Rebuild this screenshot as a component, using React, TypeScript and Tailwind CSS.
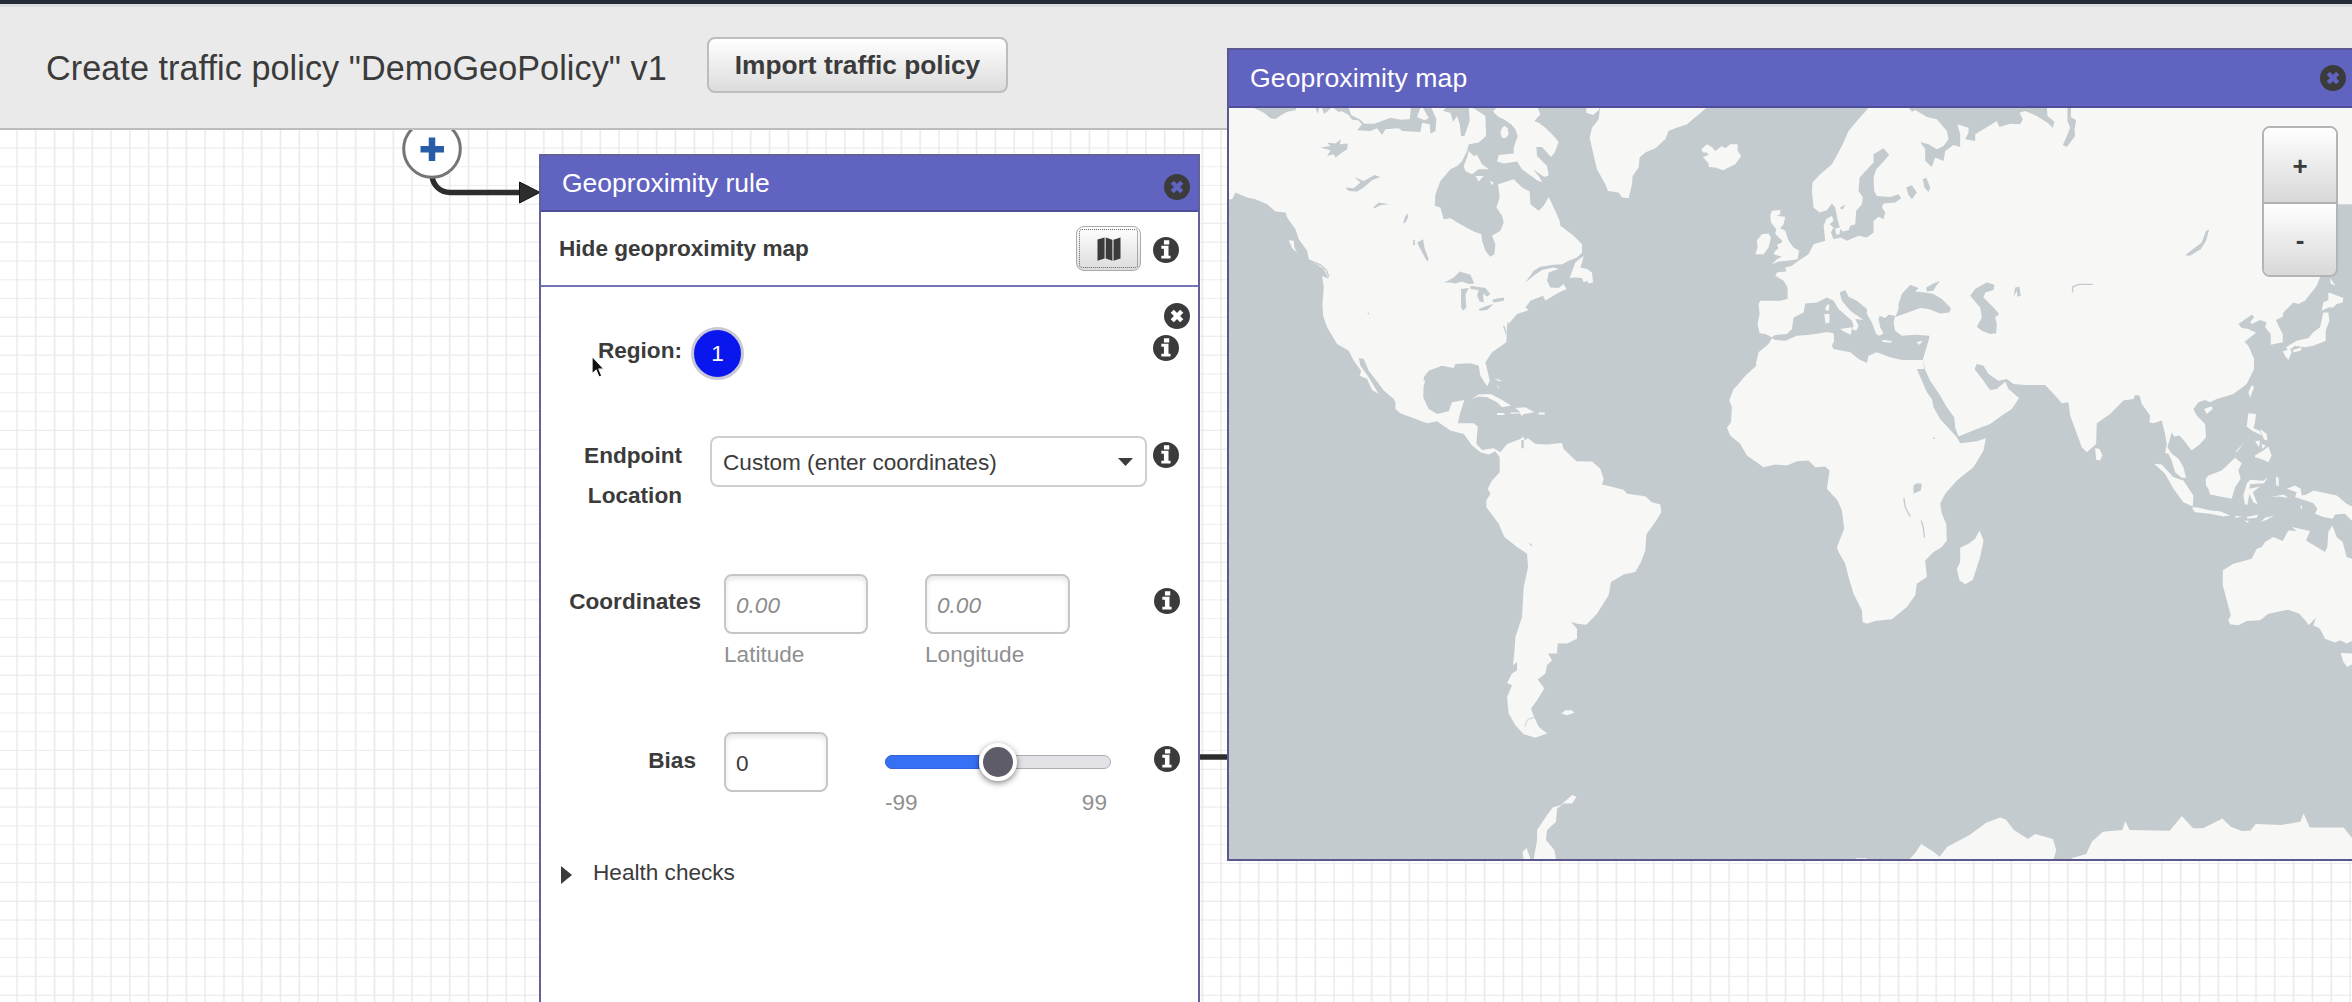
import React from "react";

const LAND = "#f7f7f6";
const SEA = "#c4cbce";
const THIRD = 1 / 3;

function InfoIcon({ className = "" }: { className?: string }) {
  return (
    <svg viewBox="0 0 24 24" className={"size-[26px] shrink-0 " + className} aria-label="Info">
      <circle cx="12" cy="12" r="12" fill="#3b3b3b" />
      <path d="M10.1 3.1h4.9v3.8h-4.9zM7.7 8.1h6.6v9.1h1.9v2.7H7.7v-2.7h2.4v-6.4H7.7z" fill="#fff" />
    </svg>
  );
}

function CloseIcon({ cross, className = "" }: { cross: string; className?: string }) {
  return (
    <svg viewBox="0 0 24 24" className={"size-[26px] shrink-0 " + className} aria-label="Close">
      <circle cx="12" cy="12" r="12" fill="#3b3b3b" />
      <path d="M7.6 7.6l8.8 8.8M16.4 7.6l-8.8 8.8" stroke={cross} strokeWidth="4.1" />
    </svg>
  );
}

function MapIcon() {
  return (
    <svg viewBox="0 0 24 24" className="size-6">
      <path
        d="M.5 2.6L7.6.4v21.2L.5 23.8zM8.7.4l6.7 2.3v21.1l-6.7-2.2zM16.5 2.7L23.5.4v21.2l-7 2.2z"
        fill="#3b3b3b"
      />
    </svg>
  );
}

function Connectors() {
  return (
    <svg className="absolute left-0 top-0 h-[872px] w-[1300px]" viewBox="0 130 1300 872">
      <path d="M432 176C433 186 441 192.5 450 192.5H522" fill="none" stroke="#2d2d2d" strokeWidth="5.5" />
      <path d="M519.5 182L540 192.4L519.5 203Z" fill="#2d2d2d" stroke="#111" strokeWidth="1" />
      <path d="M1198 757H1230" stroke="#2d2d2d" strokeWidth="5.5" />
      <circle cx="432" cy="149" r="28.3" fill="#fff" stroke="#757575" strokeWidth="3" />
      <path d="M432 137.5V161M420.5 149.2H444" stroke="#285ca8" strokeWidth="6.5" />
    </svg>
  );
}

function Cursor() {
  return (
    <svg viewBox="0 0 14 22" className="absolute left-[591px] top-[225px] h-[24px] w-[15px]">
      <path d="M1 1V17.5L4.8 14L7.4 20.4L10 19.3L7.4 13H12.2Z" fill="#111" stroke="#fff" strokeWidth="1" />
    </svg>
  );
}

function WorldMap() {
  return (
    <svg viewBox="1228.5 107 1123.5 752" preserveAspectRatio="none" className="block h-full w-full">
      <rect x="1228" y="100" width="1130" height="770" fill={SEA} />
      <g fill={LAND}>
        {/* North America, Baffin Island and Greenland */}
        <g transform={`translate(1220 40) scale(${THIRD})`}>
          <path d="M20 195H745L770 208 795 225 797 285 775 305 745 310 740 330 725 360 710 375 690 385 660 420 645 460 643 495 660 500 670 535 690 532 720 550 760 572 783 580 785 600 795 630 810 648 822 640 825 610 815 585 840 570 850 545 845 525 828 500 838 470 833 430 880 415 905 440 928 452 930 490 955 510 970 495 985 468 1000 500 1018 540 1020 555 1060 585 1085 610 1085 635 1070 650 1045 660 1025 670 1000 672 960 678 940 690 915 725 940 705 965 688 1000 680 1015 685 985 695 980 720 990 740 1015 742 1030 730 1038 745 1010 758 975 780 968 765 930 780 915 800 925 808 890 820 860 855 858 905 815 935 795 965 800 985 808 1020 800 1035 780 1005 775 975 750 968 705 970 700 982 665 975 625 990 610 1010 608 1085H525L520 1075 490 1050 460 1010 445 990 430 955 415 952 420 975 445 1010 460 1035 475 1060 455 1048 440 1015 418 1005 422 990 400 960 385 930 350 910 320 860 308 825 306 790 310 740 305 705 325 715 310 685 265 655 260 630 235 595 225 565 200 530 195 515 165 512 140 490 105 475 80 470 45 455 35 475 20 475Z" />
          <path d="M830 195L818 212 835 228 850 235 872 250 885 265 892 285 880 320 880 338 835 342 830 362 850 368 890 362 905 385 950 418 966 425 955 405 938 385 972 408 985 403 980 375 950 345 948 318 965 318 992 348 1003 335 1015 303 1000 285 975 260 955 245 942 240 960 220 950 195Z" />
          <path d="M758 195L775 212 800 218 820 210 830 195Z" fill={SEA} />
          <path d="M845 260L853 254 862 262 865 280 856 291 845 290 840 275ZM745 330L760 345 770 342 785 370 805 385 775 385 755 400 735 390 730 375 740 350ZM765 405L790 405 775 422ZM808 420L820 425 815 433Z" />
          <path d="M1098 195V215L1118 222 1135 208 1140 195Z" />
          <path d="M1140 195L1135 235 1115 260 1108 290 1118 335 1130 385 1155 430 1163 450 1195 455 1205 470 1225 472 1235 430 1237 405 1255 380 1258 350 1275 335 1305 322 1335 295 1345 270 1365 262 1400 250 1465 195Z" />
          <path d="M1048 712L1065 665 1090 645 1085 665 1080 680 1100 685 1115 695 1118 725 1105 728 1100 720 1090 725 1085 712 1065 710Z" />
          <path d="M205 598L220 600 222 620 230 635 215 622ZM823 1013L845 1020 835 1022ZM830 1030L838 1048 832 1040Z" />
        </g>
        {/* Europe */}
        <g transform={`translate(1600 40) scale(${THIRD})`}>
          <path d="M303 325L320 310 335 318 345 330 365 315 375 322 390 310 412 310 412 330 423 345 405 370 368 388 345 380 325 378 325 368 308 348 325 342 320 335 308 335Z" />
          <path d="M515 510L540 507 540 520 530 525 555 528 550 550 540 562 555 570 565 600 580 620 597 630 592 655 560 660 535 662 515 670 530 655 545 648 520 640 525 630 535 622 530 612 545 605 545 598 535 590 525 578 528 565 512 545 510 525Z" />
          <path d="M485 580L505 578 512 590 505 620 490 640 465 640 472 620 470 598Z" />
          <path d="M810 195L770 240 745 270 725 315 695 370 660 400 637 425 635 450 640 500 658 515 680 508 695 488 705 500 712 535 720 565 728 572 745 568 750 555 765 550 768 510 785 490 788 470 775 450 778 410 820 365 820 340 850 322 867 342 850 362 828 385 820 410 822 450 830 465 870 468 895 460 903 472 885 485 850 488 845 500 855 515 850 535 835 528 820 540 820 575 800 590 775 585 740 600 722 590 700 595 692 575 700 560 688 550 700 540 695 525 678 535 670 555 675 600 640 610 625 640 595 660 575 675 555 680 558 692 530 695 525 705 550 720 562 740 562 775 540 780 480 780 475 790 478 820 472 850 478 878 495 880 515 890 525 883 560 880 575 865 580 830 610 815 615 788 650 785 680 770 700 780 715 805 755 840 760 855 755 865 768 870 775 855 765 835 790 838 750 810 725 780 718 755 735 748 745 768 770 780 800 805 800 820 815 845 828 880 838 885 850 878 840 860 835 835 838 825 855 832 865 822 885 825 880 845 885 870 905 885 945 882 988 885 985 910 975 935 968 958 1020 960H1300V195Z" />
          <path d="M705 562L720 560 718 580 708 582ZM678 795L688 790 685 810 675 808ZM672 820H688V845L676 848ZM720 865L755 860 752 882 735 875ZM845 897L875 901 873 906 848 904ZM948 905L968 900 958 912Z" />
        </g>
        {/* East Asia */}
        <g transform={`translate(1960 40) scale(${THIRD})`}>
          <path d="M200 195H1180V490H1135L1110 560 1085 640 1080 710 1070 735 1035 780 1015 790 1000 785 970 815 968 828 948 838 955 855 968 880 968 905 932 912 932 880 915 860 920 845 900 838 875 850 870 845 883 828 875 822 835 850 845 862 865 865 888 876 852 905 870 930 882 955 H0V195Z" />
          <path d="M1085 810L1090 785 1105 778 1105 755 1115 758 1150 772 1148 785 1130 790 1120 800 1105 800ZM1110 712L1126 735 1112 729ZM1090 815L1105 815 1108 840 1097 870 1097 900 1060 915 1035 920 1005 915 985 930 978 920 1010 900 1045 892 1060 875 1080 860ZM968 932L990 925 995 935 985 958 975 945ZM998 928L1026 920 1021 930 1001 935Z" />
        </g>
        {/* Africa, Arabia and Madagascar */}
        <g transform={`translate(1700 300) scale(${THIRD})`}>
          <path d="M668 178L688 110 988 40H1000V253H975L940 250 920 235 895 240 865 220 850 195 830 190 823 205 850 240 860 255 870 268 890 265 915 243 925 265 957 292 935 325 905 345 870 370 830 385 775 408 765 380 762 350 740 320 720 285 690 240 675 208Z" />
          <path d="M640 178L605 178 570 170 530 155 505 165 500 187 475 175 450 155 400 145 395 135 402 120 400 98 380 94 345 100 320 103 290 105 255 120 225 118 215 113 205 130 175 155 168 185 168 195 135 225 110 255 100 265 87 300 95 320 92 365 80 382 90 405 120 430 140 465 190 500 225 492 260 495 290 482 325 480 345 500 375 498 388 510 380 565 412 600 425 630 432 685 410 740 415 755 435 790 445 830 460 880 485 930 487 965 500 970 525 962 575 957 620 920 645 885 650 850 680 830 675 780 700 755 725 740 740 720 738 670 725 640 720 610 735 580 770 540 820 500 850 450 857 413 830 422 780 428 770 410 720 355 700 320 695 295 680 275 650 205 672 205 668 178Z" />
          <path d="M838 690L850 720 840 770 818 838 795 852 778 840 770 805 780 785 780 742 805 730 825 715Z" />
        </g>
        {/* South and Southeast Asia, Australia */}
        <g transform={`translate(2030 340) scale(${THIRD})`}>
          <path d="M-10 0H640L655 15 672 55 672 85 650 130 610 160 560 175 540 185 525 178 505 185 490 205 500 225 525 250 528 290 510 310 485 330 475 318 462 300 448 285 432 288 425 275 418 300 412 320 425 340 445 355 460 380 468 412 455 412 435 395 425 360 415 340 405 338 410 310 405 280 395 240 370 248 358 245 360 225 335 190 328 165 315 163 310 175 280 180 240 220 200 248 198 310 170 335 155 320 135 265 120 225 115 185 95 188 75 165 45 133H-10Z" />
          <path d="M655 155L665 133 672 140 660 172ZM522 205L545 197 548 205 530 220ZM655 218L678 220 675 245 670 262 690 272 695 285 665 270 650 258ZM690 265L710 280 712 300 702 297 694 277ZM675 302L690 300 687 320ZM695 310L707 315 697 325ZM675 345L700 330 715 318 725 345 715 365 700 358 675 350ZM615 335L645 303 622 333ZM527 415L535 405 575 390 615 352 635 368 625 390 632 415 615 440 605 475 540 462 535 445 528 435ZM372 370L395 372 430 410 460 420 490 465 488 498 460 485 430 445 405 400ZM485 502L500 500 540 510 570 512 600 525 580 528 540 520 495 515ZM615 526L637 529 617 532ZM650 530L685 522 680 532 652 535ZM643 538L657 543 652 547ZM692 545L705 532 733 525 710 538Z" />
          <path d="M640 465L650 430 660 418 700 421 712 412 702 428 660 431 658 445 690 438 668 455 683 492 670 485 658 460 652 493 645 492ZM738 408L746 413V438L738 433ZM720 470L760 462 775 472 745 468ZM770 445L795 435 812 445 815 465 830 462 850 450 920 465 950 490 970 500V545L945 520 915 522 908 535 880 530 855 520 862 505 850 488 820 478 795 470 800 455ZM812 495h4v10h-4zM195 322L208 325 217 345 210 360 198 358Z" />
          <path d="M578 690L610 670 665 655 680 625 695 620 705 605 730 590 758 602 775 570 800 572 785 560 840 572 828 600 885 635 892 620 895 575 907 555 920 590 938 605 950 650 970 656V900L950 910 930 900 915 907 885 895 870 865 850 855 858 832 835 855 830 845 808 820 775 808 715 820 690 840 650 842 625 855 600 852 595 840 602 825 585 760 578 735ZM932 938L970 940V970L952 980 940 965Z" />
        </g>
        {/* Central and South America */}
        <g transform={`translate(1400 380) scale(${THIRD})`}>
          <path d="M-15 0H75L68 20 68 50 85 85 110 100 145 92 155 65 192 58 180 95 172 128 220 128 232 138 228 190 245 208 280 203 300 215 320 190 360 175 368 168 375 180 382 172 405 190 440 192 485 187 490 205 528 242 575 243 600 265 610 295 605 312 640 320 670 328 680 340 735 347 755 365 780 372 783 395 765 425 738 462 735 510 722 545 705 575 670 582 632 605 625 645 590 700 558 733 530 730 512 724 530 745 530 775 500 790 472 790 470 820 443 820 455 840 440 855 435 880 412 898 432 925 410 960 392 985 400 1008 415 1040 440 1060 405 1073 370 1062 345 1035 325 1000 320 950 335 915 320 908 335 880 350 870 350 845 338 855 342 815 345 770 365 710 370 620 383 560 380 520 350 500 312 470 295 430 258 380 258 360 270 340 262 325 275 300 298 275 298 230 285 212 265 222 240 215 215 195 190 160 150 150 110 122 80 128 0 98 -15 85Z" />
          <path d="M215 55L235 42 270 40 300 55 332 75 305 80 290 65 260 50 235 48ZM345 82L375 80 402 95 370 100 365 106 358 98 332 100 330 96 360 95ZM290 97h22v6h-22zM415 96h18v6h-18zM483 1000L495 990 515 990 522 998 500 1005ZM248 0H265L262 16Z" />
        </g>
        {/* Antarctica */}
        <g transform={`translate(1480 740) scale(0.5561 ${THIRD})`}>
          <path d="M78 365L76 335 83 324 92 365ZM95 365L102 300 102 270 120 225 130 202 145 195 165 165 173 170 165 190 150 190 138 205 136 245 120 270 118 300 133 330 137 365ZM768 365L782 340 793 312 815 335 826 350 840 320 880 285 910 248 935 232 945 238 960 270 985 297 998 282 1030 297 1036 330 1030 365ZM1062 365L1065 354 1090 342 1100 305 1120 275 1155 270 1160 243 1168 270 1240 272 1262 228 1282 265 1300 265 1335 235 1350 260 1370 273 1385 272 1395 252 1440 255 1475 245 1481 220 1492 262 1553 262 1570 298V365ZM675 355h20v6h-20z" />
        </g>
      </g>
      <g fill={SEA}>
        <g transform={`translate(1220 40) scale(${THIRD})`}>
          <path d="M98 195V200L130 215 150 232 165 234 178 225 200 212 225 208 230 195ZM283 195L292 218 297 195ZM303 195L310 218 320 212 333 200 333 195ZM333 195L355 214 362 210 385 222 395 236 413 238 425 250 410 268 450 270 470 262 485 282 495 265 535 262 545 270 600 273 605 245 628 250 630 278 645 270 648 235 635 205 630 195H605L625 232 612 238 590 228 602 195H572L568 235 540 236 510 230 490 238 462 248 432 248 420 236 392 222 383 195ZM668 210L690 215 698 243 710 225 718 250 722 285 732 285 748 240 745 195H680Z" />
          <path d="M300 320L330 315 320 305 345 308 362 295 358 310 382 308 380 325 365 335 345 350 340 340 320 345 330 328ZM375 440L400 442 420 425 402 408 430 420 462 402 480 408 455 418 430 440 410 452 385 450ZM458 500L475 485 505 490 480 493 462 502ZM562 517L563 530 555 545 548 548 553 530ZM590 605L608 595 612 620 625 655 620 662 600 625ZM578 597h5v16h-5zM672 725L700 710 718 692 750 702 762 728 745 730 725 722 705 728 690 725ZM722 745L745 742 735 762 738 800 728 810 722 800ZM750 735L795 742 810 760 800 768 788 758 790 785 778 782 770 765 775 748 750 745ZM775 805L800 795 820 790 800 808 778 810ZM815 778L830 773 852 770 850 780 820 785ZM440 816h6v6z" />
          <path d="M265 658L300 672 318 688 325 708M858 880L850 855M866 862L862 845" fill="none" stroke={SEA} strokeWidth="4" />
        </g>
        <g transform={`translate(1600 40) scale(${THIRD})`}>
          <path d="M922 195L935 212 945 207 980 228 1010 235 1040 270 1045 295 1030 315 1010 325 985 310 960 303 975 325 975 360 995 378 1005 350 1030 360 1035 330 1060 312 1080 318 1080 280 1072 250 1105 260 1105 275 1095 295 1125 300 1125 280 1150 265 1190 240 1198 258 1230 248 1260 250 1268 235 1258 215 1275 210 1310 225 1342 245 1358 260 1363 242 1342 225 1340 195Z" />
          <path d="M918 440L935 433 950 455 935 475 925 462ZM968 415L978 410 990 440 985 453 972 438ZM720 500L735 491 730 503 722 506ZM895 790L905 760 930 732 955 742 945 752 975 755 1000 760 1025 775 1052 802 1048 815 1020 818 985 805 960 802 915 818 885 829 890 818 895 805ZM978 740L1000 728 1020 720 1008 735 1000 750 980 752ZM1110 765L1125 745 1160 725 1183 732 1180 748 1155 755 1150 770 1180 800 1197 820 1185 830 1190 850 1188 878 1170 880 1145 870 1130 858 1145 830 1140 800Z" />
        </g>
        <g transform={`translate(1960 40) scale(${THIRD})`}>
          <path d="M322 195V240L330 260 318 290 308 312 320 318 345 285 343 268 348 238 332 228 333 195ZM160 768L165 740 178 738 182 765 172 768 170 750ZM675 643L705 620 725 605 738 570 747 567 738 600 722 625 690 645Z" />
          <path d="M337 755L338 738 355 731 398 731" fill="none" stroke={SEA} strokeWidth="4" />
        </g>
        <g transform={`translate(1700 300) scale(${THIRD})`}>
          <path d="M640 555L650 548 665 550 662 570 640 580ZM699 410h5v5h-5z" />
          <path d="M611 592L615 620 630 648M663 660L669 680 673 712M672 205V225" fill="none" stroke={SEA} strokeWidth="4" />
        </g>
        <g transform={`translate(1400 380) scale(${THIRD})`}>
          <path d="M363 178L370 178 370 203 363 203ZM385 487L395 492 393 498Z" />
          <path d="M373 1040L382 1018 402 1011" fill="none" stroke={SEA} strokeWidth="2.5" />
        </g>
      </g>
    </svg>
  );
}

const label = "text-right font-bold leading-[40px]";
const field =
  "block h-[60px] rounded-lg border-2 border-[#c6c6c6] bg-white pl-[10px] pt-1 outline-none shadow-[inset_0_3px_5px_rgba(0,0,0,0.1)] placeholder:italic placeholder:text-[#8c8c8c]";

function RuleCard() {
  return (
    <section className="absolute left-[539px] top-[24px] flex h-[900px] w-[661px] flex-col border-2 border-[#63619c] bg-white text-[22.6px]">
      <header className="flex h-[56px] shrink-0 items-center justify-between border-b-2 border-[#504e9a] bg-[#6163c0] pl-[21px] pr-[8px]">
        <h2 className="text-[26.5px] leading-[40px] text-white">Geoproximity rule</h2>
        <CloseIcon cross="#6163c0" className="mt-[7px]" />
      </header>
      <div className="flex h-[75px] shrink-0 items-center border-b-2 border-[#7573b4] pl-[18px]">
        <span className="grow font-bold leading-[40px]">Hide geoproximity map</span>
        <button className="flex h-[45px] w-[65px] items-center justify-center rounded-lg border border-[#a9a9a9] bg-linear-to-b from-white to-[#dcdcdc] p-[2px]">
          <span className="flex h-full w-full items-center justify-center rounded-[3px] border border-dotted border-[#666]">
            <MapIcon />
          </span>
        </button>
        <InfoIcon className="ml-[12px] mr-[19px] mt-[3px]" />
      </div>

      <div className="flex h-[149px] shrink-0 items-start">
        <span className={label + " mt-[44px] w-[141px]"}>Region:</span>
        <span className="ml-[9px] mt-[40px] flex size-[53px] items-center justify-center rounded-full border-[3px] border-[#c8c8d6] bg-[#0a16ee] text-white">
          1
        </span>
        <div className="ml-auto mr-[8px] mt-[16px] flex flex-col items-end gap-[6px]">
          <CloseIcon cross="#fff" />
          <InfoIcon className="mr-[11px]" />
        </div>
      </div>

      <div className="flex h-[138px] shrink-0 items-start">
        <span className={label + " w-[141px]"}>
          Endpoint
          <br />
          Location
        </span>
        <button className="ml-[28px] flex h-[51px] w-[437px] items-center justify-between rounded-lg border-2 border-[#cfcfcf] bg-white pl-[11px] pr-[12px]">
          <span className="pt-[2px]">Custom (enter coordinates)</span>
          <svg viewBox="0 0 15 8" className="h-[8px] w-[15px]">
            <path d="M0 0H15L7.5 8Z" fill="#3b3b3b" />
          </svg>
        </button>
        <InfoIcon className="ml-[6px] mt-[6px]" />
      </div>

      <div className="flex h-[158px] shrink-0 items-start">
        <span className={label + " mt-[8px] w-[160px]"}>Coordinates</span>
        <label className="ml-[23px] w-[201px] text-[#8f8f8f]">
          <input className={field + " w-[144px]"} placeholder="0.00" />
          <span className="block pt-[1px] leading-[40px]">Latitude</span>
        </label>
        <label className="text-[#8f8f8f]">
          <input className={field + " w-[145px]"} placeholder="0.00" />
          <span className="block pt-[1px] leading-[40px]">Longitude</span>
        </label>
        <InfoIcon className="ml-[84px] mt-[14px]" />
      </div>

      <div className="flex h-[121px] shrink-0 items-start">
        <span className={label + " mt-[9px] w-[155px]"}>Bias</span>
        <input className={field + " ml-[28px] w-[104px]"} defaultValue="0" />
        <div className="ml-[57px] w-[226px] pt-[23px]">
          <div className="flex h-[14px] items-center rounded-full border-[1.5px] border-[#aeaeb2] bg-[#e3e3e7]">
            <div className="-my-px -ml-px h-[14px] w-[94px] shrink-0 rounded-l-full border border-[#3563d8] bg-[#3670f4]" />
            <div className="size-[38px] shrink-0 rounded-full border-4 border-white bg-[#5e5c69] shadow-[0_2px_6px_rgba(0,0,0,0.5)]" />
          </div>
          <div className="mt-[14px] flex justify-between pr-[4px] leading-[40px] text-[#8f8f8f]">
            <span>-99</span>
            <span>99</span>
          </div>
        </div>
        <InfoIcon className="ml-[43px] mt-[14px]" />
      </div>

      <div className="flex items-center gap-[21px] pl-[20px]">
        <svg viewBox="0 0 11 18" className="mt-[3px] h-[18px] w-[11px]">
          <path d="M0 0L11 9L0 18Z" fill="#3b3b3b" />
        </svg>
        <span className="leading-[40px]">Health checks</span>
      </div>
    </section>
  );
}

function MapPanel() {
  return (
    <section className="absolute left-[1227px] top-[48px] flex h-[813px] w-[1127px] flex-col border-2 border-[#5a588f] bg-white">
      <header className="flex h-[58px] shrink-0 items-center justify-between border-b-2 border-[#504e9a] bg-[#6163c0] pl-[21px] pr-[6px]">
        <h2 className="text-[26.6px] leading-[40px] tracking-[0.1px] text-white">Geoproximity map</h2>
        <CloseIcon cross="#6163c0" />
      </header>
      <div className="relative h-[751px]">
        <WorldMap />
        <div className="absolute right-[14px] top-[18px] flex h-[151px] w-[76px] flex-col overflow-hidden rounded-lg border-2 border-[#b4b4b6] text-[26px] font-bold">
          <button className="flex-1 border-b-2 border-[#b0b0b0] bg-linear-to-b from-white to-[#d8d8d8] pt-[4px]">+</button>
          <button className="flex-1 bg-linear-to-b from-white to-[#d8d8d8] pt-[2px]">-</button>
        </div>
      </div>
    </section>
  );
}

export default function App() {
  return (
    <main className="relative flex h-[1002px] w-[2352px] flex-col overflow-hidden bg-white font-['Liberation_Sans',Arial,sans-serif] text-[#3b3b3b]">
      <header className="flex h-[130px] shrink-0 items-center border-b-2 border-t-4 border-b-[#bdbdbd] border-t-[#232a38] bg-[#eaeaea] pl-[46px] shadow-[inset_0_3px_0_#d9dbde]">
        <h1 className="w-[620px] whitespace-nowrap pt-[3px] text-[34.2px] leading-[50px] tracking-[0.06px]">
          Create traffic policy "DemoGeoPolicy" v1
        </h1>
        <button className="-mt-[2px] ml-[41px] h-[56px] w-[301px] rounded-lg border-2 border-[#bdbdbd] bg-linear-to-b from-white to-[#dcdcdc] pt-[2px] text-[26.3px] font-bold">
          Import traffic policy
        </button>
      </header>
      <div className="relative grow bg-[repeating-linear-gradient(90deg,transparent_0px,transparent_15.5px,#e9e9e9_17px,transparent_18.5px,transparent_18.815px),repeating-linear-gradient(180deg,transparent_0px,transparent_16.7px,#ededed_18px,#ededed_18.3px,transparent_18.83px)]">
        <Connectors />
        <RuleCard />
        <Cursor />
      </div>
      <MapPanel />
    </main>
  );
}
